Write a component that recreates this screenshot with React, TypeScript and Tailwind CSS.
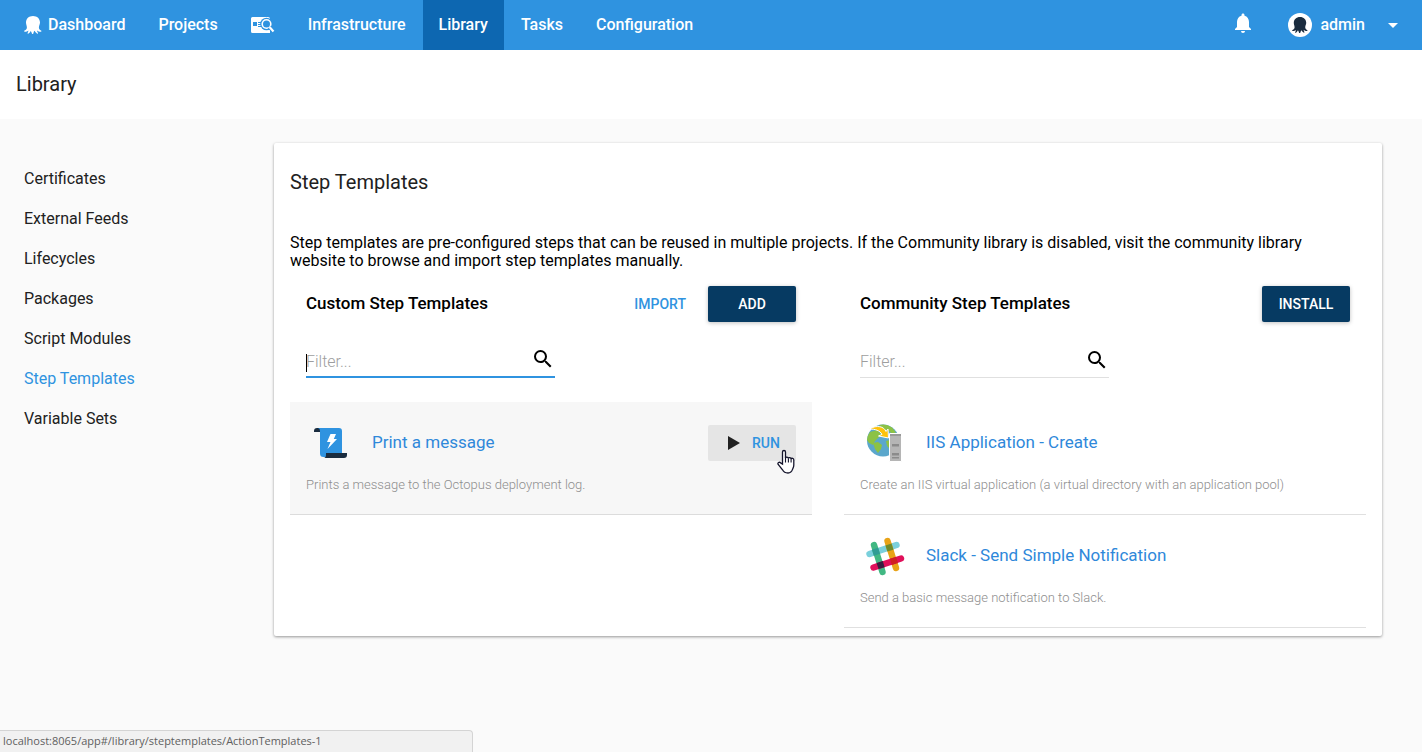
import { ReactNode } from "react";

const OCTO =
  "M9 0C4.800 0 2 2.800 2 6.600c0 2 .9 3.200.9 4.800 0 1.500-.8 2.300-2.300 3.200-.8.5-.6 1.200.2 1.200 1.500 0 2.700-.5 3.600-1.300 0 1-.4 1.700-.8 2.400-.4.800.3 1.200.9.700 1.100-.8 1.700-1.700 2.200-2.700.8.900.9 1.800 1.200 2.700.3.700 1.200.7 1.400 0 .4-1.100.5-2 1.200-2.800.6 1.100 1.400 2 2.500 2.700.7.500 1.300 0 .9-.7-.5-.9-.8-1.500-.8-2.400.9.900 2.200 1.400 3.700 1.400.8 0 .9-.7.200-1.200-1.400-.9-2.100-1.700-2.100-3.200 0-1.600 1.100-2.800 1.100-4.800C16 2.800 13.200 0 9 0z";

function Octopus({ className }: { className: string }) {
  return (
    <svg viewBox="0 0 18 18" className={className} aria-hidden="true">
      <path d={OCTO} fill="currentColor" />
    </svg>
  );
}

function ProjectSearchIcon() {
  return (
    <svg viewBox="0 0 24 18" className="block h-[18px] w-6" aria-hidden="true">
      <path d="M1.500 1H17q2 0 2 2v14H1.500A1.500 1.500 0 0 1 0 15.500v-13A1.500 1.500 0 0 1 1.500 1z" fill="#fff" />
      <path d="M2 6h4v4H2zM7 6h4v1H7zM7 8h3v1H7zM7 10h4v1H7z" fill="#2f93e0" />
      <circle cx="15.500" cy="8" r="6.300" fill="#2f93e0" />
      <circle cx="15.500" cy="8" r="4.300" fill="none" stroke="#fff" strokeWidth="1.600" />
      <path d="M18.500 11l4 4.500" stroke="#2f93e0" strokeWidth="4" />
      <path d="M18.500 11l4 4.500" stroke="#fff" strokeWidth="2.200" />
    </svg>
  );
}

function ScriptIcon() {
  return (
    <svg viewBox="0 0 34 32" className="h-8 w-[34px]" aria-hidden="true">
      <path d="M3 1h6L7 5H0V4a3 3 0 0 1 3-3z" fill="#1a2c3f" />
      <path d="M4 1h21a3 3 0 0 1 3 3v26H9.500A3.500 3.500 0 0 1 6 26.500V4a3 3 0 0 0-2-3z" fill="#2f93e0" />
      <path d="M12 26h21v2a3 3 0 0 1-3 3H9.500c2 0 2.500-1.500 2.500-3.500z" fill="#1a2c3f" />
      <path d="M16.500 7h5.500l-2.200 5H23l-9.500 10 3-7H13z" fill="#fff" />
    </svg>
  );
}

function GlobeServerIcon() {
  return (
    <svg viewBox="0 0 38 40" className="h-10 w-[38px]" aria-hidden="true">
      <circle cx="17" cy="17.500" r="16" fill="#5ba7cc" />
      <path d="M4 9l7-2 5 5-4 3-3 3-2 4-4-2-2-3q0-4 3-8z" fill="#8cc245" />
      <path d="M13 2q7-2 13 2.500l4 5-4 1-4-3-4-1zM7 20l5-1 4 3-1 4-3 4-3-4zM20 18l4-1v9l-3-3z" fill="#8cc245" />
      <path d="M3.500 6C11 1.500 18 3.500 20 8.500l2-2.500.5 9L12.500 13l3.500-1.600C14 7.500 9 6 3.500 6z" fill="#fdc20a" stroke="#fff" strokeWidth="1" />
      <path d="M23.500 10.500h12v28h-12z" fill="#b5b5b5" stroke="#fff" />
      <path d="M24 11h11v2H24z" fill="#999" />
      <path d="M26 21h7v2.500h-7zM26 30h7v2.500h-7zM26 34h7v1.500h-7z" fill="#8b8b8b" />
    </svg>
  );
}

function SlackIcon() {
  return (
    <svg viewBox="0 0 40 40" className="size-10" fill="none" strokeLinecap="round" strokeWidth="6.400" aria-hidden="true">
      <path d="M4.500 18L31.500 9" stroke="#7ad0dc" />
      <path d="M22.500 5L31 32" stroke="#e8a317" />
      <path d="M9 9l8.500 27" stroke="#41b883" />
      <path d="M8.500 31.500L36 22.500" stroke="#e0105a" />
      <g strokeLinecap="butt">
        <path d="M10 12.700l1.900 6.100" stroke="#2f9d94" />
        <path d="M23.500 8.500l1.900 6.100" stroke="#6f8b2b" />
        <path d="M14.700 26l1.900 6.100" stroke="#381e40" />
        <path d="M28 21.900l1.900 6.100" stroke="#cf2022" />
      </g>
    </svg>
  );
}

function SearchIcon() {
  return (
    <svg viewBox="0 0 24 24" className="mb-1 size-6 shrink-0" aria-hidden="true">
      <path d="M15.500 14h-.79l-.28-.27A6.471 6.471 0 0 0 16 9.500 6.500 6.500 0 1 0 9.500 16c1.610 0 3.090-.59 4.230-1.570l.27.280v.79l5 4.990L20.490 19l-4.990-5zm-6 0C7.010 14 5 11.990 5 9.500S7.010 5 9.500 5 14 7.010 14 9.500 11.990 14 9.500 14z" fill="#000" />
    </svg>
  );
}

function NavLink({ children, active, label }: { children: ReactNode; active?: boolean; label?: string }) {
  return (
    <a
      href="#"
      aria-label={label}
      aria-current={active ? "page" : undefined}
      className={
        active
          ? "flex h-full items-center gap-1.5 bg-[#0d67b1] px-4"
          : "flex h-full items-center gap-1.5 px-4"
      }
    >
      {children}
    </a>
  );
}

function Filter({ label, focused }: { label: string; focused?: boolean }) {
  return (
    <div
      className={
        focused
          ? "relative mx-4 mt-6 flex h-8 w-[249px] items-center border-b-2 border-[#2f93e0]"
          : "relative mx-4 mt-6 flex h-8 w-[249px] items-center border-b border-[#e0e0e0]"
      }
    >
      {focused && <span className="absolute top-2 left-0 h-[18px] w-px bg-black" />}
      <input
        type="text"
        aria-label={label}
        placeholder="Filter..."
        className="h-full min-w-0 flex-1 bg-transparent text-base font-light outline-none placeholder:text-[#9e9e9e]"
      />
      <SearchIcon />
    </div>
  );
}

const primary =
  "h-9 w-22 rounded-xs bg-[#063a62] text-sm font-medium text-white shadow-[0_1px_4px_rgba(0,0,0,0.25)]";

function Template({ icon, title, text, action, hovered }: { icon: ReactNode; title: string; text: string; action?: ReactNode; hovered?: boolean }) {
  return (
    <li
      className={
        hovered
          ? "border-b border-[#dcdcdc] bg-[#f7f7f7] px-4 pt-4 pb-5"
          : "border-b border-[#e0e0e0] px-4 pt-4 pb-5"
      }
    >
      <div className="flex h-[50px] items-center">
        <div className="flex w-[50px] justify-center">{icon}</div>
        <a href="#" className="ml-4 flex-1 text-[17px] text-[#2f88da]">{title}</a>
        {action}
      </div>
      <p className="mt-2 text-[13px] leading-[18px] font-light text-[#8e8e8e]">{text}</p>
    </li>
  );
}

const sections = ["Certificates", "External Feeds", "Lifecycles", "Packages", "Script Modules", "Step Templates", "Variable Sets"];

export default function App() {
  return (
    <div className="relative flex min-h-screen flex-col bg-[#fafafa] font-[Roboto,sans-serif] text-[#212121]">
      <nav className="flex h-[50px] items-center gap-px bg-[#2f93e0] pl-2 text-base font-medium text-white">
        <NavLink><Octopus className="size-[18px]" />Dashboard</NavLink>
        <NavLink>Projects</NavLink>
        <NavLink label="Search projects"><ProjectSearchIcon /></NavLink>
        <NavLink>Infrastructure</NavLink>
        <NavLink active>Library</NavLink>
        <NavLink>Tasks</NavLink>
        <NavLink>Configuration</NavLink>
        <button aria-label="Notifications" className="mr-8 ml-auto">
          <svg viewBox="0 2 24 24" className="size-6" aria-hidden="true">
            <path d="M12 22c1.100 0 2-.9 2-2h-4a2 2 0 0 0 2 2zm6-6v-5c0-3.070-1.640-5.640-4.500-6.320V4c0-.83-.67-1.500-1.500-1.500s-1.500.67-1.500 1.500v.68C7.630 5.360 6 7.920 6 11v5l-2 2v1h16v-1l-2-2z" fill="#fff" />
          </svg>
        </button>
        <button className="flex items-center pr-[17px]">
          <span className="mr-2 flex size-6 items-center justify-center rounded-full bg-white">
            <Octopus className="size-4 text-[#1a2c3f]" />
          </span>
          admin
          <svg viewBox="0 0 24 24" className="ml-4 size-6" aria-hidden="true">
            <path d="M7 10l5 5 5-5z" fill="#fff" />
          </svg>
        </button>
      </nav>
      <header className="flex h-[69px] items-center bg-white px-4 pb-0.5">
        <h1 className="text-xl">Library</h1>
      </header>
      <div className="flex items-start pr-10">
        <aside className="w-[274px] shrink-0 pt-10 pl-6">
          <ul>
            {sections.map((s) => (
              <li key={s} className="flex h-10 items-center">
                <a href="#" className={s === "Step Templates" ? "text-base text-[#2f93e0]" : "text-base"}>{s}</a>
              </li>
            ))}
          </ul>
        </aside>
        <main className="mt-6 min-w-0 flex-1 rounded-xs bg-white px-4 pb-2 shadow-[0_1px_3px_rgba(0,0,0,0.4)]">
          <h2 className="flex h-[78px] items-center text-xl">Step Templates</h2>
          <p className="mt-[13px] pr-4 text-base leading-[18px] text-black">
            Step templates are pre-configured steps that can be reused in multiple projects. If the Community library is disabled, visit the community library website to browse and import step templates manually.
          </p>
          <div className="mt-4 grid grid-cols-2 gap-8">
            <section>
              <div className="flex items-center px-4">
                <h3 className="flex-1 text-[17px] font-medium text-black">Custom Step Templates</h3>
                <button className="mr-[22px] text-sm font-medium text-[#2f93e0]">IMPORT</button>
                <button className={primary}>ADD</button>
              </div>
              <Filter label="Filter custom step templates" focused />
              <ul className="mt-6">
                <Template
                  hovered
                  icon={<ScriptIcon />}
                  title="Print a message"
                  text="Prints a message to the Octopus deployment log."
                  action={
                    <button className="flex h-9 w-22 items-center rounded-xs bg-[#e5e5e5] text-sm font-medium text-[#2f93e0]">
                      <svg viewBox="0 0 12 14" className="mr-3 ml-5 h-3.5 w-3" aria-hidden="true">
                        <path d="M0 0l12 7-12 7z" fill="#212121" />
                      </svg>
                      RUN
                    </button>
                  }
                />
              </ul>
            </section>
            <section>
              <div className="flex items-center px-4">
                <h3 className="flex-1 text-[17px] font-medium text-black">Community Step Templates</h3>
                <button className={primary}>INSTALL</button>
              </div>
              <Filter label="Filter community step templates" />
              <ul className="mt-6">
                <Template icon={<GlobeServerIcon />} title="IIS Application - Create" text="Create an IIS virtual application (a virtual directory with an application pool)" />
                <Template icon={<SlackIcon />} title="Slack - Send Simple Notification" text="Send a basic message notification to Slack." />
              </ul>
            </section>
          </div>
        </main>
      </div>
      <svg viewBox="0 0 18 25" className="absolute top-[449px] left-[777px] h-[25px] w-[18px]" aria-hidden="true">
        <path d="M5.500 15V3a1.500 1.500 0 0 1 3 0v6c.3-1.200 2.600-1.200 2.900.3.300-1.100 2.500-1 2.700.6.400-1 2.700-.8 2.700 1v5c0 2-.8 3-1.300 4.500C14.700 22.800 13 24 11 24c-3 0-4.500-1.200-5.500-3.200L1.200 15.500c-1-1.800 1.200-3 2.400-1.600z" fill="#fff" stroke="#14142b" strokeWidth="1.300" />
        <path d="M8.500 8v5.500M11.400 9.300v4.200M14.100 10v3.500" stroke="#14142b" strokeWidth="1.100" />
      </svg>
      <div className="absolute bottom-0 left-0 flex h-[22px] w-[473px] items-center rounded-tr-sm border-t border-r border-[#d4d4d4] bg-[#f1f1f1] pl-[3px] font-['Open_Sans',sans-serif] text-[11px] text-[#5f5f5f]">
        localhost:8065/app#/library/steptemplates/ActionTemplates-1
      </div>
    </div>
  );
}
